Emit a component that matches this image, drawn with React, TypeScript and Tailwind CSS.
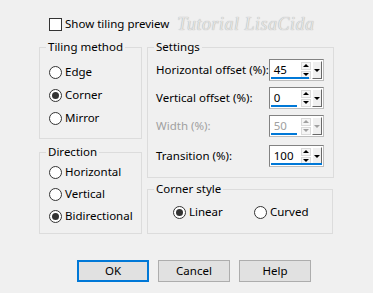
import React from 'react';

const Radio = ({ label, checked }: { label: string; checked?: boolean }) => (
  <div className="flex h-4 items-center">
    <span className="flex h-[13px] w-[13px] items-center justify-center rounded-full border border-[#333] bg-white">
      {checked && <span className="h-[7px] w-[7px] rounded-full bg-[#333]" />}
    </span>
    <span className="ml-[3px] whitespace-nowrap">{label}</span>
  </div>
);

const Group = ({ title, className, children }: { title: string; className: string; children: React.ReactNode }) => (
  <fieldset className={`border border-[#dcdcdc] ${className}`}>
    <legend className="ml-[6px] px-[2px] leading-4">{title}</legend>
    {children}
  </fieldset>
);

const Spin = ({ value, bar, disabled }: { value: string; bar: number; disabled?: boolean }) => (
  <div className="relative flex h-[22px] w-[55px] shrink-0 items-center border border-[#828282] border-r-[#bdbdbd] border-b-[#bdbdbd] bg-white">
    <span className={`flex-1 pl-[4px] leading-4 ${disabled ? 'text-[#a0a0a0]' : ''}`}>{value}</span>
    {/* spin up / down */}
    <div className="flex h-[17px] w-[10px] flex-col gap-[1px]">
      <div className="flex flex-1 items-center justify-center border border-[#dadada] bg-[#f5f5f5]">
        <span className={`h-0 w-0 border-x-[3px] border-b-[3px] border-x-transparent ${disabled ? 'border-b-[#a0a0a0]' : 'border-b-black'}`} />
      </div>
      <div className="flex flex-1 items-center justify-center border border-[#dadada] bg-[#f5f5f5]">
        <span className={`h-0 w-0 border-x-[3px] border-t-[3px] border-x-transparent ${disabled ? 'border-t-[#a0a0a0]' : 'border-t-black'}`} />
      </div>
    </div>
    {/* dropdown */}
    <div className="mx-[1px] flex h-[18px] w-[10px] items-center justify-center border border-l-white border-t-white border-r-[#696969] border-b-[#696969] bg-[#f0f0f0]">
      <span className={`h-0 w-0 border-x-[3px] border-t-[3px] border-x-transparent ${disabled ? 'border-t-[#a0a0a0]' : 'border-t-black'}`} />
    </div>
    <div className="absolute bottom-[1px] left-[1px] h-[2px] bg-[#0078d7]" style={{ width: bar }} />
  </div>
);

const Row = ({ label, value, bar, disabled }: { label: string; value: string; bar: number; disabled?: boolean }) => (
  <div className="flex h-[22px] items-center justify-between pr-[9px] pl-[8px]">
    <span className={`whitespace-nowrap ${disabled ? 'text-[#a0a0a0]' : ''}`}>{label}</span>
    <Spin value={value} bar={bar} disabled={disabled} />
  </div>
);

const Button = ({ label, primary }: { label: string; primary?: boolean }) => (
  <button
    className={`flex h-[22px] w-[72px] items-center justify-center bg-[#e1e1e1] ${
      primary ? 'border-2 border-[#0078d7]' : 'border border-[#adadad]'
    }`}
  >
    {label}
  </button>
);

export default function App() {
  return (
    <div className="h-[293px] w-[373px] overflow-hidden bg-[#f0f0f0] font-['Noto_Sans',sans-serif] text-[11.5px] text-black">
      <div className="mt-[16px] flex h-4 items-center pl-[49px]">
        <span className="h-[13px] w-[13px] border border-[#333] bg-white" />
        <span className="ml-[3px]">Show tiling preview</span>
        <span className="ml-[8px] font-['Liberation_Serif',serif] text-[18px] italic tracking-[0.5px] text-[#e4e4e4] [text-shadow:0_0_1px_#9a9a9a]">
          Tutorial LisaCida
        </span>
      </div>

      <div className="mt-[7px] flex gap-[5px] pl-[39px]">
        <div className="flex w-[103px] flex-col gap-[5px]">
          <Group title="Tiling method" className="h-[100px]">
            <div className="flex flex-col gap-[7px] pl-[9px] pt-[9px]">
              <Radio label="Edge" />
              <Radio label="Corner" checked />
              <Radio label="Mirror" />
            </div>
          </Group>
          <Group title="Direction" className="h-[90px]">
            <div className="flex flex-col gap-[6px] pl-[9px] pt-[4px]">
              <Radio label="Horizontal" />
              <Radio label="Vertical" />
              <Radio label="Bidirectional" checked />
            </div>
          </Group>
        </div>

        <div className="flex w-[186px] flex-col gap-[3px]">
          <Group title="Settings" className="h-[139px]">
            <div className="flex flex-col gap-[6px] pt-[4px]">
              <Row label="Horizontal offset (%):" value="45" bar={38} />
              <Row label="Vertical offset (%):" value="0" bar={26} />
              <Row label="Width (%):" value="50" bar={26} disabled />
              <div className="pt-[2px]">
                <Row label="Transition (%):" value="100" bar={51} />
              </div>
            </div>
          </Group>
          <Group title="Corner style" className="h-[53px]">
            <div className="flex pl-[25px] pt-[7px]">
              <div className="w-[81px]">
                <Radio label="Linear" checked />
              </div>
              <Radio label="Curved" />
            </div>
          </Group>
        </div>
      </div>

      <div className="mt-[26px] flex gap-[9px] pl-[77px]">
        <Button label="OK" primary />
        <Button label="Cancel" />
        <Button label="Help" />
      </div>
    </div>
  );
}
